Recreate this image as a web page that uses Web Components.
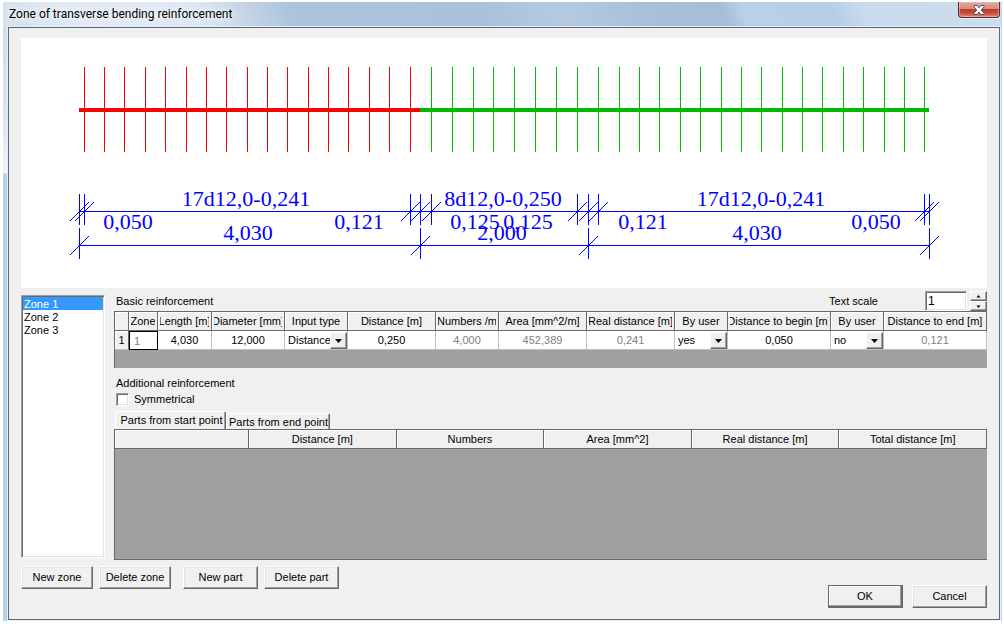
<!DOCTYPE html>
<html lang="en">
<head>
<meta charset="utf-8">
<title>Zone of transverse bending reinforcement</title>
<style>
  html, body { margin: 0; height: 100%; background: #fff; }
  body { font: 11px/13px "Liberation Sans", Arial, sans-serif; color: #000; }
</style>
</head>
<body>
<zone-dialog></zone-dialog>

<template id="tpl-window">
  <style>
    :host { display: block; box-sizing: border-box; min-height: 100%; padding: 2px 2px 2px 3px; }
    .frame { box-sizing: border-box; padding: 0 1px 1px 5px; border-right: 1px solid #c4d8ec;
      background: linear-gradient(#cddceb 0, #dbe6f2 120px, #eef4fa 171px, #b4cfe8 172px, #b4cfe8 100%); }
    header { display: flex; align-items: flex-start; justify-content: space-between; height: 25px; margin: 0 -1px 0 -5px; padding: 0 1px 0 6px; box-sizing: border-box;
      background: linear-gradient(68deg, #d3e1ef 0, #e2ebf4 8%, #dde8f3 20%, #c3d3e5 25%, #adc4dd 29%, #a9c1db 48%, #b5cae1 56%, #a8c0da 64%, #a5bdd7 72%, #bad0e8 74%, #b7cee7 83%, #c9dbec 86%, #cbdcec 100%); }
    h1 { margin: 0; font: 12px/24px Roboto, "Open Sans", sans-serif; text-shadow: 0 0 6px #fff, 0 0 10px #fff; }
    .close { width: 42px; height: 16px; padding: 0; display: grid; place-items: center; border: 1px solid #5a2a2c; border-top: 0; border-radius: 0 0 4px 4px;
      background: linear-gradient(#e3aaa1 0, #d98a7e 45%, #bf3b27 50%, #c8503a 75%, #e08b74 100%); box-shadow: inset 0 0 0 1px #f0c4bc88, 0 1px 0 #e6eff8; }
    main { box-sizing: border-box; border: 1px solid #5c6878; background: #f0f0f0; box-shadow: 0 0 0 1px #e6eff8; }
  </style>
  <section class="frame">
    <header>
      <h1><slot name="title"></slot></h1>
      <button class="close" aria-label="Close">
        <svg width="14" height="12" viewBox="0 0 14 12"><path d="M2 1.5h3.2L7 3.8 8.800 1.500H12v1.300L9.300 6 12 9.200v1.300H8.800L7 8.200l-1.800 2.300H2V9.200L4.700 6 2 2.800Z" fill="#fff" stroke="#4d5366" stroke-width="1"/></svg>
      </button>
    </header>
    <main><slot></slot></main>
  </section>
</template>

<template id="tpl-drawing">
  <style>
    :host { display: block; background: #fff; }
    svg { display: block; width: 100%; height: 250px; }
    line { shape-rendering: crispEdges; }
    .dim line { stroke: #00f; }
    text { font: 22px "Liberation Serif", "Times New Roman", serif; fill: #00f; text-anchor: middle; }
  </style>
  <svg viewBox="21 38 966 250" role="img" aria-label="Reinforcement layout"><g class="bars"></g><g class="dim"></g></svg>
</template>

<template id="tpl-button">
  <style>
    :host { display: block; width: 75px; height: 23px; }
    button { box-sizing: border-box; width: 100%; height: 100%; padding: 0; font: inherit; color: #000; background: #f0f0f0;
      border: 1px solid; border-color: #fff #696969 #696969 #fff; box-shadow: inset -1px -1px #a0a0a0, inset 1px 1px #e3e3e3; }
    :host([narrow]) { width: 72px; }
    :host([default]) button { border-color: #696969; border-width: 1px 2px 2px 1px; box-shadow: inset -1px -1px #a0a0a0, inset 1px 1px #fff; }
  </style>
  <button><slot></slot></button>
</template>

<template id="tpl-list">
  <style>
    :host { display: block; }
    select { box-sizing: border-box; display: block; width: 100%; height: 100%; margin: 0; font: inherit; color: #000; background: #fff; overflow: hidden; outline: 0; border-radius: 0;
      border: 1px solid; border-color: #a0a0a0 #fff #fff #a0a0a0; box-shadow: inset 1px 1px #696969, inset -1px -1px #e3e3e3; padding: 1px; }
    option { box-sizing: border-box; min-height: 13px; padding: 1px 1px 0; font: inherit; line-height: 12px; }
    option:checked { background: #3399ff linear-gradient(#3399ff, #3399ff); color: #fff; }
  </style>
  <select size="3" aria-label="Zones"></select>
</template>

<template id="tpl-stepper">
  <style>
    :host { display: flex; align-items: flex-start; }
    label { margin: 4px 47px 0 0; }
    input { box-sizing: border-box; width: 42px; height: 20px; margin: 0 3px 0 0; padding: 0 2px; font: 12px "Liberation Sans", Arial, sans-serif; border: 1px solid; border-color: #a0a0a0 #fff #fff #a0a0a0; box-shadow: inset 1px 1px #696969, inset -1px -1px #e3e3e3; background: #fff; color: #000; }
    div { display: grid; grid-template-rows: 10px 10px; width: 17px; }
    button { display: grid; place-items: center; padding: 0; background: #f0f0f0; border: 1px solid; border-color: #fff #696969 #696969 #fff; box-shadow: inset -1px -1px #a0a0a0; }
    svg { display: block; }
  </style>
  <label for="scale">Text scale</label><input id="scale" value="1">
  <div>
    <button aria-label="Increase"><svg width="5" height="3"><path d="M0.500 2.500h4L2.500 0Z"/></svg></button>
    <button aria-label="Decrease"><svg width="5" height="3"><path d="M0.500 0.500h4L2.500 3Z"/></svg></button>
  </div>
</template>

<template id="tpl-grid">
  <style>
    :host { display: block; box-sizing: border-box; background: #a0a0a0; border: 1px solid #696969; border-width: 1px 0 0 1px; }
    :host([closed]) { border-bottom-width: 1px; }
    table { width: 100%; table-layout: fixed; border-collapse: separate; border-spacing: 0; }
    th, td { box-sizing: border-box; padding: 0; font-weight: normal; overflow: hidden; }
    th { height: 19px; background: #f0f0f0; border-right: 1px solid #696969; border-bottom: 1px solid #696969; box-shadow: inset 1px 1px #fff; }
    th span { display: flex; justify-content: center; overflow: hidden; white-space: nowrap; margin: 0 2px; }
    td { height: 19px; background: #fff; border-right: 1px solid #c0c0c0; border-bottom: 1px solid #c0c0c0; }
    tbody th { border-color: #696969 #696969 #c0c0c0; }
    input { box-sizing: border-box; display: block; width: 100%; height: 18px; padding: 0; border: 0; background: none; font: inherit; color: #000; text-align: center; }
    input:read-only { color: #808080; }
    .current { border-color: #000; }
    .current input { border: 1px solid #000; border-width: 1px 0 0 1px; text-align: left; padding: 0 4px; }
    .pick { display: grid; grid-template-columns: 1fr 17px; height: 18px; }
    select { grid-area: 1 / 1 / 2 / 3; min-width: 0; appearance: none; border: 0; margin: 0; padding: 0 0 0 3px; background: none; font: inherit; color: #000; }
    i { grid-area: 1 / 2; box-sizing: border-box; display: grid; place-items: center; pointer-events: none; margin: 1px 0 0; background: #f0f0f0; border: 1px solid; border-color: #fff #696969 #696969 #fff; box-shadow: inset -1px -1px #a0a0a0; }
  </style>
  <table><colgroup></colgroup><thead><tr></tr></thead><tbody></tbody></table>
</template>

<template id="tpl-tabs">
  <style>
    :host { display: flex; align-items: flex-end; height: 18px; padding-left: 1px; }
    button { box-sizing: border-box; min-width: 0; height: 16px; padding: 2px 2px 0; font: inherit; color: #000; background: #f0f0f0; border: 1px solid; border-color: #fff #696969 transparent #fff; border-bottom: 0; box-shadow: inset -1px 0 #a0a0a0; border-radius: 2px 2px 0 0; white-space: nowrap; flex: 0 0 104px; }
    button[aria-selected="true"] { height: 18px; padding: 0 2px 0 4px; flex-basis: 111px; }
  </style>
  <button role="tab" aria-selected="true">Parts from start point</button><button role="tab" aria-selected="false">Parts from end point</button>
</template>

<template id="tpl-check">
  <style>
    :host { display: block; }
    label { display: flex; align-items: center; gap: 5px; height: 13px; }
    input { appearance: none; box-sizing: border-box; width: 13px; height: 13px; margin: 0; background: #fff; border: 1px solid; border-color: #a0a0a0 #fff #fff #a0a0a0; box-shadow: inset 1px 1px #696969, inset -1px -1px #e3e3e3; }
    input:checked { background: #fff linear-gradient(#000, #000) center / 5px 5px no-repeat; }
  </style>
  <label><input type="checkbox"><span><slot></slot></span></label>
</template>

<template id="tpl-dialog">
  <style>
    :host { display: block; height: 100%; }
    .client { display: flex; flex-direction: column; padding: 10px 12px 11px; }
    .work { display: grid; grid-template-columns: 84px minmax(0, 1fr); column-gap: 9px; padding-top: 3px; }
    zone-list { margin: 4px 0 2px; }
    .head { display: flex; justify-content: space-between; height: 20px; }
    .head span { padding: 4px 0 0 2px; }
    .basic { height: 57px; }
    .extra { display: grid; gap: 3px; padding: 9px 0 5px 2px; }
    .parts { height: 131px; }
    footer { display: flex; justify-content: space-between; padding-top: 6px; }
    .left, .right { display: flex; }
    .left { gap: 6px; }
    .left .split { margin-left: 6px; }
    .right { gap: 9px; padding-top: 19px; }
  </style>
  <app-window>
    <span slot="title">Zone of transverse bending reinforcement</span>
    <div class="client">
      <rebar-drawing></rebar-drawing>
      <div class="work">
        <zone-list items="Zone 1|Zone 2|Zone 3"></zone-list>
        <div>
          <div class="head"><span>Basic reinforcement</span><value-stepper></value-stepper></div>
          <data-grid class="basic"></data-grid>
          <div class="extra"><span>Additional reinforcement</span><check-box>Symmetrical</check-box></div>
          <tab-strip role="tablist"></tab-strip>
          <data-grid class="parts" closed></data-grid>
        </div>
      </div>
      <footer>
        <div class="left"><push-button narrow>New zone</push-button><push-button narrow>Delete zone</push-button><push-button class="split">New part</push-button><push-button>Delete part</push-button></div>
        <div class="right"><push-button default>OK</push-button><push-button>Cancel</push-button></div>
      </footer>
    </div>
  </app-window>
</template>

<script>
class Base extends HTMLElement {
  constructor() {
    super();
    this.attachShadow({ mode: "open" }).append(document.getElementById(this.constructor.template).content.cloneNode(true));
  }
}
class AppWindow extends Base { static template = "tpl-window"; }
class PushButton extends Base { static template = "tpl-button"; }
class ValueStepper extends Base { static template = "tpl-stepper"; }
class TabStrip extends Base { static template = "tpl-tabs"; }
class CheckBox extends Base { static template = "tpl-check"; }

class ZoneList extends Base {
  static template = "tpl-list";
  connectedCallback() {
    const select = this.shadowRoot.querySelector("select");
    this.getAttribute("items").split("|").forEach((name, i) => select.add(new Option(name, name, i === 0, i === 0)));
  }
}

class RebarDrawing extends Base {
  static template = "tpl-drawing";
  connectedCallback() {
    const line = (x1, y1, x2, y2, extra = "") => `<line x1="${x1}" y1="${y1}" x2="${x2}" y2="${y2}" ${extra}/>`;
    const red = 'stroke="#f00"', green = 'stroke="#00bb00"';
    let bars = "";
    for (const [start, step, count, colour] of [[84.25, 20.365, 17, red], [431.2, 20.93, 8, green], [598.9, 20.365, 17, green]])
      for (let k = 0; k < count; k++) {
        const x = Math.floor(start + step * k) + 0.5;
        bars += line(x, 67, x, 152, colour);
      }
    bars += line(79, 110, 420, 110, red + ' stroke-width="4"') + line(420, 110, 929, 110, green + ' stroke-width="4"');
    this.shadowRoot.querySelector(".bars").innerHTML = bars;

    let dim = "";
    const chain = (y, ticks) => {
      dim += line(79, y + 0.5, 930, y + 0.5);
      for (const x of ticks)
        dim += line(x + 0.5, y - 17, x + 0.5, y + 14) + line(x - 9, y + 10, x + 10, y - 9);
    };
    chain(211, [79, 84, 410, 420, 431, 577, 588, 598, 924, 929]);
    chain(245, [79, 420, 588, 929]);
    for (const [x, y, s] of [
      [246, 206, "17d12,0-0,241"], [503, 206, "8d12,0-0,250"], [761, 206, "17d12,0-0,241"],
      [128, 229, "0,050"], [359, 229, "0,121"], [475, 229, "0,125"], [528, 229, "0,125"], [643, 229, "0,121"], [876, 229, "0,050"],
      [248, 240, "4,030"], [502, 240, "2,000"], [757, 240, "4,030"]])
      dim += `<text x="${x}" y="${y}">${s}</text>`;
    this.shadowRoot.querySelector(".dim").innerHTML = dim;
  }
}

class DataGrid extends Base {
  static template = "tpl-grid";
  set model({ columns, rows }) {
    const root = this.shadowRoot;
    root.querySelector("colgroup").innerHTML = columns.map(c => `<col${c.width ? ` style="width:${c.width}px"` : ""}>`).join("");
    root.querySelector("thead tr").innerHTML = columns.map(c => `<th scope="col"><span>${c.title}</span></th>`).join("");
    root.querySelector("tbody").innerHTML = rows.map((row, r) => "<tr>" + row.map((value, i) => {
      const c = columns[i];
      if (i === 0) return `<th scope="row"><span>${value}</span></th>`;
      if (c.options) return `<td><div class="pick"><select aria-label="${c.title}">${c.options.map(o => `<option${o === value ? " selected" : ""}>${o}</option>`).join("")}</select><i><svg width="7" height="4"><path d="M0 0h7L3.500 4Z"/></svg></i></div></td>`;
      return `<td${c.current ? ' class="current"' : ""}><input aria-label="${c.title}" value="${value}"${c.locked ? " readonly" : ""}></td>`;
    }).join("") + "</tr>").join("");
  }
}

class ZoneDialog extends Base {
  static template = "tpl-dialog";
  connectedCallback() {
    this.shadowRoot.querySelector(".basic").model = {
      columns: [
        { title: "", width: 14 }, { title: "Zone", width: 29, locked: true, current: true },
        { title: "Length [m]", width: 54 }, { title: "Diameter [mm]", width: 73 },
        { title: "Input type", width: 63, options: ["Distance", "Numbers"] },
        { title: "Distance [m]", width: 88 }, { title: "Numbers /m", width: 63, locked: true },
        { title: "Area [mm^2/m]", width: 88, locked: true }, { title: "Real distance [m]", width: 88, locked: true },
        { title: "By user", width: 53, options: ["yes", "no"] }, { title: "Distance to begin [m]", width: 103 },
        { title: "By user", width: 53, options: ["yes", "no"] }, { title: "Distance to end [m]", width: 103, locked: true }],
      rows: [["1", "1", "4,030", "12,000", "Distance", "0,250", "4,000", "452,389", "0,241", "yes", "0,050", "no", "0,121"]]
    };
    this.shadowRoot.querySelector(".parts").model = {
      columns: [{ title: "", width: 134 }, { title: "Distance [m]" }, { title: "Numbers" }, { title: "Area [mm^2]" }, { title: "Real distance [m]" }, { title: "Total distance [m]" }],
      rows: []
    };
  }
}

customElements.define("app-window", AppWindow);
customElements.define("push-button", PushButton);
customElements.define("value-stepper", ValueStepper);
customElements.define("tab-strip", TabStrip);
customElements.define("check-box", CheckBox);
customElements.define("zone-list", ZoneList);
customElements.define("rebar-drawing", RebarDrawing);
customElements.define("data-grid", DataGrid);
customElements.define("zone-dialog", ZoneDialog);
</script>
</body>
</html>
